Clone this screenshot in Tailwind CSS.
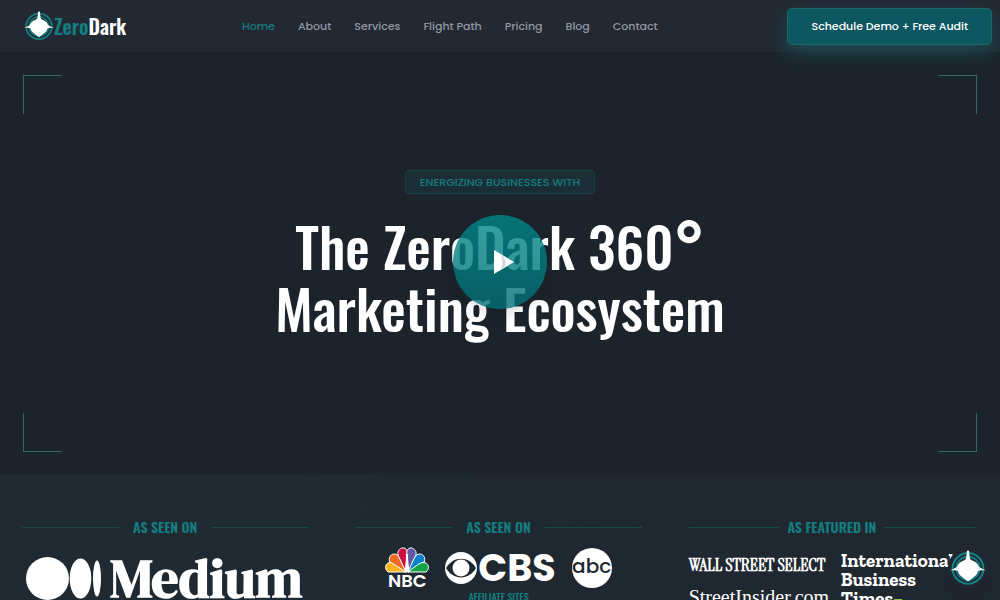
<!DOCTYPE html>
<html lang="en">
<head>
    <meta charset="UTF-8">
    <meta name="viewport" content="width=device-width, initial-scale=1.0">
    <title>ZeroDark</title>
    <script src="https://cdn.jsdelivr.net/npm/@tailwindcss/browser@4"></script>
    <style>
        .poppins {
            font-family: Poppins, Inter, sans-serif;
        }
        .inter {
            font-family: Inter, sans-serif;
        }
        .oswald {
            font-family: Oswald, "Liberation Sans Narrow", "Liberation Sans", sans-serif;
        }
        .serif {
            font-family: "Liberation Serif", serif;
        }
        .narrow-serif {
            font-family: "Instrument Serif", "Liberation Serif", serif;
        }
        .display {
            font-family: "DM Serif Display", "Abril Fatface", "Playfair Display", "Liberation Serif", serif;
        }
        .slab {
            font-family: "Roboto Slab", "Zilla Slab", "DejaVu Serif Condensed", "DejaVu Serif", serif;
        }
    </style>
</head>

<body class="h-screen overflow-hidden bg-[#1c232b] text-white poppins">

    <!-- ray mark, used in the header and the floating button -->
    <svg class="hidden">
        <symbol id="ray" viewBox="0 0 40 40">
            <circle cx="20" cy="20.500" r="17" fill="none" stroke="#147d80" stroke-width="2.4"/>
            <circle cx="20" cy="20.500" r="13" fill="none" stroke="#147d80" stroke-width="2"/>
            <path d="M18.800 1q1.200-1 2.400 0l.9 8c.4 1.700 1.600 2.300 3.200 2.900 3.600 1.200 5.500 3.600 7 6.600 1.200 1.300 3 2 7.700 4-4.500-.2-7.600-.3-8.600.9-.8 3.600-3.600 6.100-6.700 8L20 35l-4.700-3.600c-3.100-1.900-5.900-4.400-6.700-8-1-1.200-4.100-1.100-8.600-.9 4.700-2 6.500-2.700 7.700-4 1.500-3 3.400-5.400 7-6.600 1.600-.6 2.800-1.200 3.200-2.900z" fill="#fff"/>
        </symbol>
    </svg>

    <header class="flex h-[52px] items-center bg-[#222933] pl-6 pr-2">
        <a href="#" class="flex items-center">
            <svg class="size-[30px]"><use href="#ray"/></svg>
            <span class="oswald text-[20px] leading-6 font-semibold"><span class="text-[#147d80]">Zero</span>Dark</span>
        </a>
        <nav class="flex grow justify-center gap-[23px] pr-3.5 text-[11px] font-medium text-[#9398a3]">
            <a href="#" class="text-[#147d80]">Home</a>
            <a href="#">About</a>
            <a href="#">Services</a>
            <a href="#">Flight Path</a>
            <a href="#">Pricing</a>
            <a href="#">Blog</a>
            <a href="#">Contact</a>
        </nav>
        <button class="h-[37px] rounded-[5px] border border-[#17696e] bg-[#0d5860] px-[23px] text-[11px] font-medium shadow-[0_8px_20px_#147d8066]">Schedule Demo + Free Audit</button>
    </header>

    <section class="relative flex h-[423px] flex-col p-[23px]">
        <div class="flex justify-between">
            <span class="size-[39px] border-t border-l border-[#2f686e]"></span>
            <span class="size-[39px] border-t border-r border-[#2f686e]"></span>
        </div>
        <div class="flex grow flex-col items-center justify-center pb-5 text-center">
            <p class="flex h-6 items-center rounded border border-[#174247] bg-[#1b2e35] px-3.5 pt-0.5 text-[11px] font-medium text-[#147d80]">ENERGIZING BUSINESSES WITH</p>
            <h1 class="oswald mt-5 text-[55px] leading-[62px] font-medium">The ZeroDark 360<span class="inter text-[68px] leading-[0] font-semibold">°</span><br>Marketing Ecosystem</h1>
        </div>
        <div class="flex justify-between">
            <span class="size-[39px] border-b border-l border-[#2f686e]"></span>
            <span class="size-[39px] border-b border-r border-[#2f686e]"></span>
        </div>
        <button aria-label="Play video" class="absolute inset-x-0 top-0 bottom-1 m-auto flex size-[94px] items-center justify-center rounded-full bg-linear-to-b from-[#00888a]/80 to-[#006f75]/80 shadow-lg">
            <svg class="ml-2 h-6 w-5" viewBox="0 0 20 24"><path d="M0 0l20 12L0 24z" fill="#fff"/><path d="M7 4.200q6 4 4 13.200l-4 2.400q3-8 0-15.600z" fill="#d5d8da"/></svg>
        </button>
    </section>

    <section class="grid grid-cols-3 gap-[47px] bg-linear-to-r from-[#1f2a32] to-[#1f272f] pt-10 pr-[25px] pb-8 pl-[22px]">
        <div>
            <h2 class="oswald flex items-center gap-3.5 text-[14px] leading-6 font-semibold text-[#147d80] before:h-px before:grow before:bg-[#18474d] after:h-px after:grow after:bg-[#18474d]">AS SEEN ON</h2>
            <div class="mt-4 flex items-center gap-2 pl-1">
                <svg class="h-[43px] w-[76px] shrink-0" viewBox="0 0 76 43" fill="#fff"><circle cx="21.500" cy="21.500" r="21.500"/><ellipse cx="54.500" cy="21.500" rx="10.800" ry="20"/><ellipse cx="71" cy="21.500" rx="4" ry="18"/></svg>
                <span class="display text-[54px] leading-[46px] font-bold">Medium</span>
            </div>
        </div>

        <div>
            <h2 class="oswald flex items-center gap-3.5 text-[14px] leading-6 font-semibold text-[#147d80] before:h-px before:grow before:bg-[#18474d] after:h-px after:grow after:bg-[#18474d]">AS SEEN ON</h2>
            <div class="mt-2 flex items-center justify-center gap-4">
                <div class="flex flex-col items-center">
                    <svg class="h-[26px] w-11" viewBox="0 0 44 26" stroke="#fff" stroke-width="1">
                        <path d="M21 25L3 25C-1 22 0 15 6 15.500C9 15.500 16 21 21 25z" fill="#fbb41a"/>
                        <path d="M21 25L4.500 14.500C3 9 8 5 12.500 8C15 11 18 18 21 25z" fill="#f06a22"/>
                        <path d="M21 25L13 8C12 3 16 .5 19 1C22 2 23 5 21.500 9z" fill="#cc1041"/>
                        <path d="M23 25L22.500 9C21 5 22 2 25 1C28 .5 32 3 31 8z" fill="#6358a5"/>
                        <path d="M23 25C26 18 29 11 31.500 8C36 5 41 9 39.500 14.500z" fill="#0882ca"/>
                        <path d="M23 25C28 21 35 15.500 38 15.500C44 15 45 22 41 25z" fill="#12a547"/>
                        <path d="M19.500 25.500L21.500 9l-1-2h3l-1 2 2 16.500z" fill="#fff" stroke="none"/>
                    </svg>
                    <span class="text-[18px] leading-4 font-semibold">NBC</span>
                </div>
                <div class="flex items-center gap-px">
                    <svg class="size-8" viewBox="0 0 32 32"><circle cx="16" cy="16" r="16" fill="#fff"/><path d="M1 16C8 3.500 24 3.500 31 16C24 28.500 8 28.500 1 16z" fill="#1f2830"/><circle cx="16" cy="16" r="8.500" fill="#fff"/></svg>
                    <span class="text-[38px] leading-8 font-bold">CBS</span>
                </div>
                <span class="flex size-10 items-center justify-center rounded-full bg-white pb-1 text-[20px] leading-6 font-medium text-[#1f2830]">abc</span>
            </div>
            <p class="oswald mt-0.5 text-center text-[10px] leading-3 font-medium text-[#147d80]">AFFILIATE SITES</p>
        </div>

        <div>
            <h2 class="oswald flex items-center gap-2 text-[14px] leading-6 font-semibold text-[#147d80] before:h-px before:grow before:bg-[#18474d] after:h-px after:grow after:bg-[#18474d]">AS FEATURED IN</h2>
            <div class="mt-3 flex gap-2">
                <div class="serif w-36 shrink-0 whitespace-nowrap">
                    <p class="narrow-serif text-[18px] leading-7 font-bold">WALL STREET SELECT</p>
                    <p class="mt-0.5 text-[20px] leading-8">StreetInsider.com</p>
                </div>
                <p class="slab text-[19px] leading-[19px] font-black">International<br>Business<br>Times<span class="ml-px inline-block h-1 w-2 bg-[#8bc53f] align-middle"></span></p>
            </div>
        </div>
    </section>

    <button aria-label="Open assistant" class="fixed right-3 bottom-3 flex size-10 items-center justify-center rounded-full bg-[#1f2830] shadow-lg">
        <svg class="size-9"><use href="#ray"/></svg>
    </button>

</body>
</html>
